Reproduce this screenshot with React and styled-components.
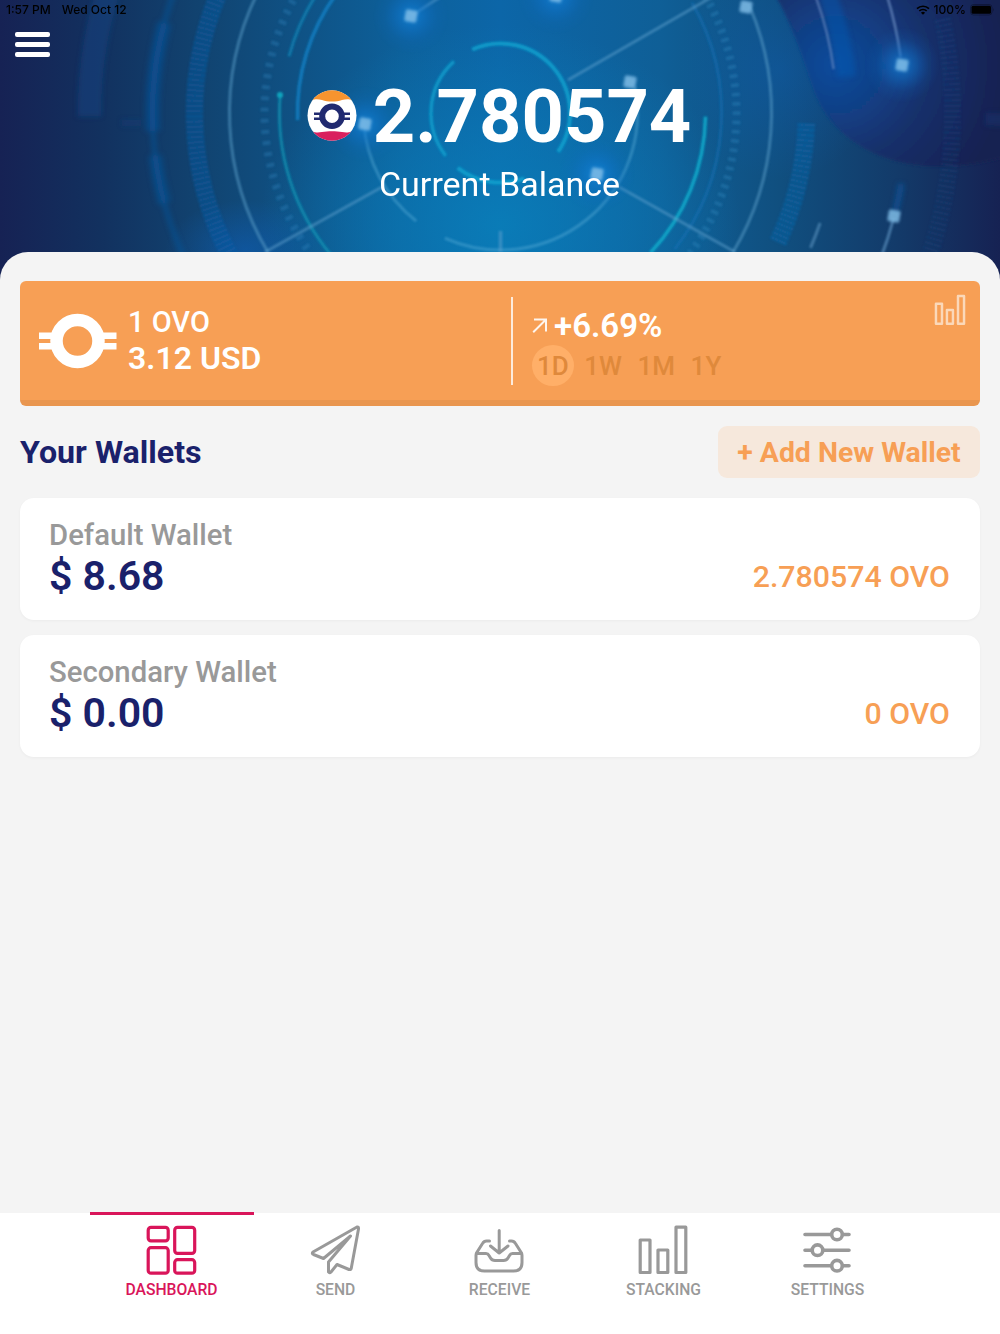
import styled, { createGlobalStyle } from 'styled-components';

const wallets = [
  { name: 'Default Wallet', fiat: '$ 8.68', amount: '2.780574 OVO' },
  { name: 'Secondary Wallet', fiat: '$ 0.00', amount: '0 OVO' },
];

const ranges = ['1D', '1W', '1M', '1Y'];

const nodes = [
  { x: 411, y: 16, glow: true },
  { x: 556, y: -4, glow: true },
  { x: 365, y: 124, glow: true },
  { x: 597, y: 174, glow: true },
  { x: 902, y: 65, glow: true },
  { x: 630, y: 82 },
  { x: 746, y: 7 },
  { x: 894, y: 216 },
];

const polar = (r, deg) => {
  const a = (deg * Math.PI) / 180;
  return `${(500.5 + r * Math.cos(a)).toFixed(1)} ${(113 + r * Math.sin(a)).toFixed(1)}`;
};

// Clockwise arc round the radar centre, 0deg points to the right
const Arc = ({ r, from, to, ...rest }) => (
  <path
    d={`M${polar(r, from)} A${r} ${r} 0 ${to - from > 180 ? 1 : 0} 1 ${polar(r, to)}`}
    fill="none"
    {...rest}
  />
);

const RadarBackdrop = () => (
  <Backdrop viewBox="0 0 1000 284" preserveAspectRatio="none" aria-hidden="true">
    <defs>
      <linearGradient id="base">
        <stop offset="0" stopColor="#162254" />
        <stop offset="0.1" stopColor="#12315f" />
        <stop offset="0.2" stopColor="#114370" />
        <stop offset="0.3" stopColor="#0f5285" />
        <stop offset="0.4" stopColor="#0d609a" />
        <stop offset="0.5" stopColor="#0c66a8" />
        <stop offset="0.66" stopColor="#0f5f97" />
        <stop offset="0.78" stopColor="#104f7f" />
        <stop offset="0.9" stopColor="#133a69" />
        <stop offset="1" stopColor="#162253" />
      </linearGradient>
      <radialGradient id="core">
        <stop offset="0" stopColor="#0981bb" stopOpacity="0.8" />
        <stop offset="0.5" stopColor="#0a7cb9" stopOpacity="0.5" />
        <stop offset="1" stopColor="#0a7cb9" stopOpacity="0" />
      </radialGradient>
      <radialGradient id="glow">
        <stop offset="0" stopColor="#1387e0" stopOpacity="0.75" />
        <stop offset="0.4" stopColor="#0f74cd" stopOpacity="0.45" />
        <stop offset="0.7" stopColor="#0f6cc4" stopOpacity="0.15" />
        <stop offset="1" stopColor="#0f6cc4" stopOpacity="0" />
      </radialGradient>
      <radialGradient id="haze">
        <stop offset="0" stopColor="#0f5fb8" stopOpacity="0.85" />
        <stop offset="1" stopColor="#0f5fb8" stopOpacity="0" />
      </radialGradient>
      <radialGradient id="dark" gradientUnits="userSpaceOnUse" cx="835" cy="65" r="170">
        <stop offset="0" stopColor="#104a9c" />
        <stop offset="0.25" stopColor="#114188" />
        <stop offset="0.55" stopColor="#13306b" />
        <stop offset="1" stopColor="#152151" />
      </radialGradient>
      <filter id="soft" x="-20%" y="-20%" width="140%" height="140%">
        <feGaussianBlur stdDeviation="0.8" />
      </filter>
      <filter id="node" x="-50%" y="-50%" width="200%" height="200%">
        <feGaussianBlur stdDeviation="1.4" />
      </filter>
      <filter id="softer">
        <feGaussianBlur stdDeviation="2.4" />
      </filter>
    </defs>

    <rect width="1000" height="284" fill="url(#base)" />
    <ellipse cx="500" cy="225" rx="240" ry="200" fill="url(#core)" />
    <ellipse cx="245" cy="250" rx="80" ry="50" fill="url(#haze)" opacity="0.65" />
    <ellipse cx="780" cy="70" rx="100" ry="110" fill="url(#haze)" opacity="0.45" />
    <path
      d="M776 -4 C794 30 802 56 811 82 C820 112 836 130 856 143 C884 162 920 168 950 166 C972 165 990 161 1004 157 V-4 Z"
      fill="url(#dark)"
      filter="url(#node)"
    />

    <g filter="url(#softer)">
      <Arc r={411} from={179.5} to={200} stroke="#10478a" strokeWidth="24" opacity="0.42" />
      <Arc r={348} from={177} to={195} stroke="#0d559b" strokeWidth="15" opacity="0.45" />
      <Arc r={348} from={165} to={173} stroke="#0d559b" strokeWidth="14" opacity="0.42" />
      <Arc r={348} from={155} to={205} stroke="#0d5ba4" strokeWidth="5" opacity="0.45" />
      <Arc r={348} from={-20} to={-6} stroke="#0f5db9" strokeWidth="18" opacity="0.4" />
      <Arc r={407} from={10} to={14} stroke="#0d559b" strokeWidth="6" opacity="0.7" />
      <Arc r={502} from={0} to={1.5} stroke="#173f7c" strokeWidth="34" opacity="0.35" />
      <Arc r={369} from={178} to={179} stroke="#173f7c" strokeWidth="20" opacity="0.35" />
    </g>

    <g filter="url(#soft)">
      <Arc r={306} from={148} to={203} stroke="#0e5ca5" strokeWidth="17" opacity="0.35" />
      <Arc r={306} from={148} to={203} stroke="#116bb8" strokeWidth="18" opacity="0.28" strokeDasharray="2.2 3" />
      <Arc r={306} from={2} to={25} stroke="#0e67ac" strokeWidth="17" opacity="0.3" />
      <Arc r={306} from={2} to={25} stroke="#1273b9" strokeWidth="18" opacity="0.35" strokeDasharray="2.2 3" />
      <Arc r={452} from={-12} to={19} stroke="#19508c" strokeWidth="17" opacity="0.3" strokeDasharray="2.2 3.2" />
      <Arc r={236} from={145} to={210} stroke="#2f86bf" strokeWidth="8" opacity="0.36" strokeDasharray="4 7.2" />
      <Arc r={236} from={-32} to={38} stroke="#2f86bf" strokeWidth="8" opacity="0.4" strokeDasharray="3.5 5.8" />
      <Arc r={221} from={-30} to={38} stroke="#1474b9" strokeWidth="3" opacity="0.5" />

      <Arc r={271} from={149} to={206} stroke="#5a9cc7" strokeWidth="3" opacity="0.55" />
      <Arc r={271} from={-23} to={31} stroke="#5a9cc7" strokeWidth="3" opacity="0.55" />
      <Arc r={137} from={-11} to={114} stroke="#5eb0dc" strokeWidth="3" opacity="0.42" />
      <Arc r={137} from={128} to={176} stroke="#5eb0dc" strokeWidth="3" opacity="0.42" />
      <Arc r={336} from={-20} to={-7.5} stroke="#7796c9" strokeWidth="2.5" opacity="0.55" />
      <Arc r={338} from={19} to={23.5} stroke="#659cc9" strokeWidth="3" opacity="0.55" />
      <Arc r={404} from={-17} to={-8} stroke="#7796c9" strokeWidth="2.5" opacity="0.65" />
      <Arc r={407} from={15} to={21} stroke="#659cc9" strokeWidth="3" opacity="0.6" />

      <Arc r={221} from={140} to={185} stroke="#0c96b5" strokeWidth="3" opacity="0.75" />
      <Arc r={219} from={195} to={212} stroke="#0d8ebf" strokeWidth="3" opacity="0.65" />
      <Arc r={203} from={178} to={216} stroke="#1686cb" strokeWidth="3.5" opacity="0.75" />
      <Arc r={205} from={1} to={43} stroke="#0caacb" strokeWidth="3.5" opacity="0.9" />
      <Arc r={69.5} from={246} to={394} stroke="#0ca6d2" strokeWidth="4" opacity="0.8" />
      <Arc r={69.5} from={142} to={228} stroke="#0ca6d2" strokeWidth="3.5" opacity="0.75" />
      <Arc r={69.5} from={70} to={128} stroke="#0ca6d2" strokeWidth="4" opacity="0.8" />
      <circle cx="280" cy="95" r="3" fill="#0fa5be" />

      <g stroke="#63a4d0" strokeWidth="2.8" opacity="0.5">
        <path d="M568 80 L712 -3" />
        <path d="M382 187 L265 252" />
        <path d="M619 187 L735 252" />
        <path d="M411 16 L440 -3" />
        <path d="M500.500 231 V252" strokeWidth="3.500" />
      </g>
    </g>

    {nodes.map((n) => (
      <g key={`${n.x}-${n.y}`}>
        {n.glow && <circle cx={n.x} cy={n.y} r="38" fill="url(#glow)" />}
        <rect
          x={n.x - 6}
          y={n.y - 6}
          width="12"
          height="12"
          rx="2"
          fill="#7fbce6"
          opacity="0.85"
          filter="url(#node)"
          transform={`rotate(10 ${n.x} ${n.y})`}
        />
      </g>
    ))}
  </Backdrop>
);

const OvoBadge = () => (
  <svg width="50" height="52" viewBox="0 0 50 52">
    <clipPath id="badge">
      <ellipse cx="25" cy="25.500" rx="24.500" ry="25.300" />
    </clipPath>
    <g clipPath="url(#badge)">
      <rect width="50" height="52" fill="#fff" />
      <path d="M0 0 H50 V15 C45 8 40 9 35 10 C29 12 21 12 15 10 C10 9 5 8 0 15 Z" fill="#f7942f" />
      <path d="M0 52 H50 V37 C45 43 40 43 35 42 C29 41 21 41 15 42 C10 43 5 43 0 37 Z" fill="#d9205e" />
    </g>
    <path d="M7 23.800 H15 M7 28.800 H15 M35 23.800 H43 M35 28.800 H43" stroke="#212a70" strokeWidth="2.600" />
    <circle cx="25" cy="26.300" r="9.800" fill="none" stroke="#212a70" strokeWidth="6" />
  </svg>
);

const OvoMark = () => (
  <svg width="78" height="56" viewBox="0 0 78 56" fill="#fff">
    <path d="M0 19.500 H15 V26 H0 Z M0 30 H15 V36.500 H0 Z M63 19.500 H77.500 V26 H63 Z M63 30 H77.500 V36.500 H63 Z" />
    <circle cx="38.500" cy="28" r="21" fill="none" stroke="#fff" strokeWidth="12.500" />
  </svg>
);

const BarsIcon = ({ size = 52, stroke = 3.2 }) => (
  <svg width={size} height={size} viewBox="0 0 52 52" fill="none" stroke="currentColor" strokeWidth={stroke} strokeLinejoin="round">
    <rect x="3.200" y="16" width="9.800" height="32.500" />
    <rect x="21" y="26" width="9.800" height="22.500" />
    <rect x="39" y="3.200" width="9.800" height="45.300" />
  </svg>
);

const DashboardIcon = () => (
  <svg width="52" height="52" viewBox="0 0 52 52" fill="none" stroke="currentColor" strokeWidth="3.200">
    <rect x="3.200" y="3.400" width="20" height="13.500" rx="2.800" />
    <rect x="29.700" y="3.400" width="20" height="26" rx="2.800" />
    <rect x="3.200" y="23.700" width="20" height="25.500" rx="2.800" />
    <rect x="29.700" y="35.700" width="20" height="13.500" rx="2.800" />
  </svg>
);

const SendIcon = () => (
  <svg width="52" height="52" viewBox="0 0 52 52" fill="none" stroke="currentColor" strokeWidth="3" strokeLinejoin="round" strokeLinecap="round">
    <path d="M48 3 L4 28 Q2.500 29.500 4.500 30.500 L14.500 34.500 L41.500 12 L19.500 38 V48 Q20.500 49.500 22 48 L28 40.500 L40 45.500 Q42 46 42.300 44 L49.500 5 Q49.700 2.500 48 3 Z" />
  </svg>
);

const ReceiveIcon = () => (
  <svg width="52" height="52" viewBox="0 0 52 52" fill="none" stroke="currentColor" strokeWidth="3" strokeLinejoin="round" strokeLinecap="round">
    <path d="M16.500 17 H13.500 Q11 17 9.500 19.500 L3.800 28.500 Q3 30 3 31.500 V38.500 Q3 47 11.500 47 H40.500 Q49 47 49 38.500 V31.500 Q49 30 48.200 28.500 L42.500 19.500 Q41 17 38.500 17 H36.500" />
    <path d="M3.500 29.500 H13 Q15 29.500 16 31.500 L17.500 34 Q19 36.500 22 36.500 H30.500 Q33.500 36.500 35 34 L36.500 31.500 Q37.500 29.500 39.500 29.500 H48.500" />
    <path d="M26.200 6.500 V29 M17.500 22 L26.200 29 L35 22" />
  </svg>
);

const SettingsIcon = () => (
  <svg width="52" height="52" viewBox="0 0 52 52" fill="none" stroke="currentColor" strokeWidth="3.600" strokeLinecap="round">
    <path d="M4 10.500 H30 M42 10.500 H48 M4 26.200 H10.500 M22.500 26.200 H48 M4 41.700 H30 M42 41.700 H48" />
    <circle cx="36" cy="10.500" r="5.300" />
    <circle cx="16.500" cy="26.200" r="5.300" />
    <circle cx="36" cy="41.700" r="5.300" />
  </svg>
);

const tabs = [
  { label: 'DASHBOARD', icon: <DashboardIcon />, active: true },
  { label: 'SEND', icon: <SendIcon /> },
  { label: 'RECEIVE', icon: <ReceiveIcon /> },
  { label: 'STACKING', icon: <BarsIcon /> },
  { label: 'SETTINGS', icon: <SettingsIcon /> },
];

const App = () => (
  <Page>
    <GlobalStyle />
    <Header>
      <RadarBackdrop />
      <StatusBar>
        <StatusGroup $gap="11px">
          <span>1:57 PM</span>
          <span>Wed Oct 12</span>
        </StatusGroup>
        <StatusGroup $gap="4px">
          <svg width="14" height="10" viewBox="0 0 14 10">
            <path d="M1 3.700 A8.600 8.600 0 0 1 13 3.700 M3.300 6 A5.300 5.300 0 0 1 10.700 6" fill="none" stroke="#000" strokeWidth="1.700" />
            <path d="M7 9.800 L4.900 7.700 A3 3 0 0 1 9.100 7.700 Z" />
          </svg>
          <span>100%</span>
          <svg width="26" height="12" viewBox="0 0 26 12">
            <rect x="0.500" y="0.500" width="21.500" height="10.500" rx="3" fill="none" stroke="#000" strokeOpacity="0.3" />
            <rect x="1.500" y="1.700" width="19.500" height="8" rx="1.500" />
            <path d="M23.200 4 Q24.600 5.800 23.200 7.600 Z" opacity="0.4" />
          </svg>
        </StatusGroup>
      </StatusBar>
      <MenuBtn aria-label="Menu">
        <MenuLine />
        <MenuLine />
        <MenuLine />
      </MenuBtn>
      <Balance>
        <OvoBadge />
        <BalanceValue>2.780574</BalanceValue>
      </Balance>
      <BalanceLabel>Current Balance</BalanceLabel>
    </Header>

    <Sheet>
      <RateCard>
        <RateSide>
          <OvoMark />
          <div>
            <RateUnit>1 OVO</RateUnit>
            <RateValue>3.12 USD</RateValue>
          </div>
        </RateSide>
        <Divider />
        <ChangeSide>
          <Change>
            <svg width="16" height="16" viewBox="0 0 16 16" fill="none" stroke="#fff" strokeWidth="2" opacity="0.9">
              <path d="M2 1.500 H14 V13.500 M14 1.500 L1.200 14.300" />
            </svg>
            +6.69%
          </Change>
          <Ranges>
            {ranges.map((range, i) => (
              <Range key={range} $active={i === 0}>
                {range}
              </Range>
            ))}
          </Ranges>
        </ChangeSide>
        <ChartBtn aria-label="Chart">
          <BarsIcon size={32} stroke={4} />
        </ChartBtn>
      </RateCard>

      <SectionHead>
        <SectionTitle>Your Wallets</SectionTitle>
        <AddBtn>+ Add New Wallet</AddBtn>
      </SectionHead>

      {wallets.map((wallet) => (
        <WalletCard key={wallet.name}>
          <div>
            <WalletName>{wallet.name}</WalletName>
            <WalletFiat>{wallet.fiat}</WalletFiat>
          </div>
          <WalletAmount>{wallet.amount}</WalletAmount>
        </WalletCard>
      ))}
    </Sheet>

    <TabBar>
      {tabs.map((tab) => (
        <Tab key={tab.label} $active={tab.active}>
          {tab.icon}
          <TabLabel>{tab.label}</TabLabel>
        </Tab>
      ))}
    </TabBar>
  </Page>
);

export default App;

// Styles
const GlobalStyle = createGlobalStyle`
  * {
    box-sizing: border-box;
    margin: 0;
    padding: 0;
  }

  body {
    font-family: Roboto, 'Liberation Sans', sans-serif;
    background: #f4f4f4;
  }

  button {
    border: none;
    background: transparent;
    font-family: inherit;
  }

  svg {
    display: block;
    flex-shrink: 0;
  }
`;

const Page = styled.div`
  width: 1000px;
  height: 1334px;
  display: flex;
  flex-direction: column;
  overflow: hidden;
`;

const Header = styled.header`
  position: relative;
  isolation: isolate;
  height: 284px;
  flex-shrink: 0;
  display: flex;
  flex-direction: column;
`;

const Backdrop = styled.svg`
  position: absolute;
  inset: 0;
  z-index: -1;
  width: 100%;
  height: 100%;
`;

const StatusBar = styled.div`
  height: 20px;
  padding: 0 4px 0 6px;
  display: flex;
  align-items: center;
  justify-content: space-between;
  font-family: Inter, sans-serif;
  font-size: 12px;
  line-height: 14px;
  font-weight: 500;
  color: #000;
`;

const StatusGroup = styled.div`
  display: flex;
  align-items: center;
  gap: ${({ $gap }) => $gap};
`;

const MenuBtn = styled.button`
  width: 35px;
  margin: 12px 0 0 15px;
  display: flex;
  flex-direction: column;
  gap: 5px;
`;

const MenuLine = styled.span`
  height: 5px;
  border-radius: 2px;
  background: #fff;
`;

const Balance = styled.div`
  height: 74px;
  margin-top: 22px;
  padding-right: 2px;
  display: flex;
  align-items: center;
  justify-content: center;
  gap: 16px;
`;

const BalanceValue = styled.h1`
  padding-top: 1px;
  font-size: 74px;
  line-height: 74px;
  font-weight: 700;
  color: #fff;
`;

const BalanceLabel = styled.p`
  margin-top: 11px;
  padding-right: 1px;
  font-size: 34px;
  line-height: 40px;
  text-align: center;
  color: #fff;
`;

const Sheet = styled.main`
  position: relative;
  flex: 1;
  margin-top: -32px;
  padding: 29px 20px 0;
  border-radius: 28px 28px 0 0;
  background: #f4f4f4;
`;

const RateCard = styled.section`
  height: 125px;
  padding: 16px 14px 0 19px;
  display: flex;
  align-items: flex-start;
  border-radius: 6px;
  background: linear-gradient(#f79f55 119px, #e9964f 119px);
  color: #fff;
`;

const RateSide = styled.div`
  width: 472px;
  height: 88px;
  display: flex;
  align-items: center;
  gap: 11px;
`;

const RateUnit = styled.p`
  margin-top: -2px;
  font-size: 29px;
  line-height: 36px;
  font-weight: 500;
`;

const RateValue = styled.p`
  font-size: 32px;
  line-height: 37px;
  font-weight: 600;
`;

const Divider = styled.div`
  width: 2px;
  height: 88px;
  background: #fdebdc;
`;

const ChangeSide = styled.div`
  flex: 1;
  padding: 10px 0 0 19px;
`;

const Change = styled.p`
  display: flex;
  align-items: center;
  gap: 6px;
  font-size: 33px;
  line-height: 38px;
  font-weight: 600;
`;

const Ranges = styled.div`
  display: flex;
  align-items: center;
  gap: 5.5px;
`;

const Range = styled.button`
  min-width: 41px;
  height: 41px;
  padding: 0 5px;
  border-radius: 50%;
  background: ${({ $active }) => ($active ? '#ffaf68' : 'transparent')};
  color: #df893b;
  font-size: 26px;
  font-weight: 500;
  white-space: nowrap;
`;

const ChartBtn = styled.button`
  margin-top: -3px;
  color: #fbd8b9;
`;

const SectionHead = styled.div`
  margin: 20px 0;
  display: flex;
  align-items: center;
  justify-content: space-between;
`;

const SectionTitle = styled.h2`
  font-size: 32.2px;
  font-weight: 700;
  color: #1a216b;
`;

const AddBtn = styled.button`
  width: 262px;
  height: 52px;
  border-radius: 9px;
  background: #f6e8dc;
  color: #f79f55;
  font-size: 28.4px;
  font-weight: 700;
  white-space: nowrap;
`;

const WalletCard = styled.article`
  height: 122px;
  margin-bottom: 15px;
  padding: 19px 30px 0 29px;
  display: flex;
  justify-content: space-between;
  border-radius: 14px;
  background: #fff;
  box-shadow: 0 1px 3px rgba(0, 0, 0, 0.04);
`;

const WalletName = styled.p`
  font-size: 29.3px;
  line-height: 36px;
  font-weight: 500;
  color: #999;
`;

const WalletFiat = styled.p`
  font-size: 41px;
  line-height: 46px;
  font-weight: 600;
  color: #1a216b;
`;

const WalletAmount = styled.p`
  margin-top: 42px;
  font-size: 30.3px;
  line-height: 36px;
  font-weight: 500;
  color: #f79f55;
`;

const TabBar = styled.nav`
  height: 121px;
  padding: 0 90px;
  display: flex;
  background: #fff;
  position: relative;
`;

const Tab = styled.button`
  width: 164px;
  height: 95px;
  margin-top: -1px;
  padding: 9px 1px 0 0;
  display: flex;
  flex-direction: column;
  align-items: center;
  border-top: 3px solid ${({ $active }) => ($active ? '#d9155a' : 'transparent')};
  color: ${({ $active }) => ($active ? '#d9155a' : '#999')};

  svg {
    margin-right: 1px;
  }
`;

const TabLabel = styled.span`
  margin-top: 3px;
  font-size: 15.7px;
  line-height: 22px;
  font-weight: 500;
`;
